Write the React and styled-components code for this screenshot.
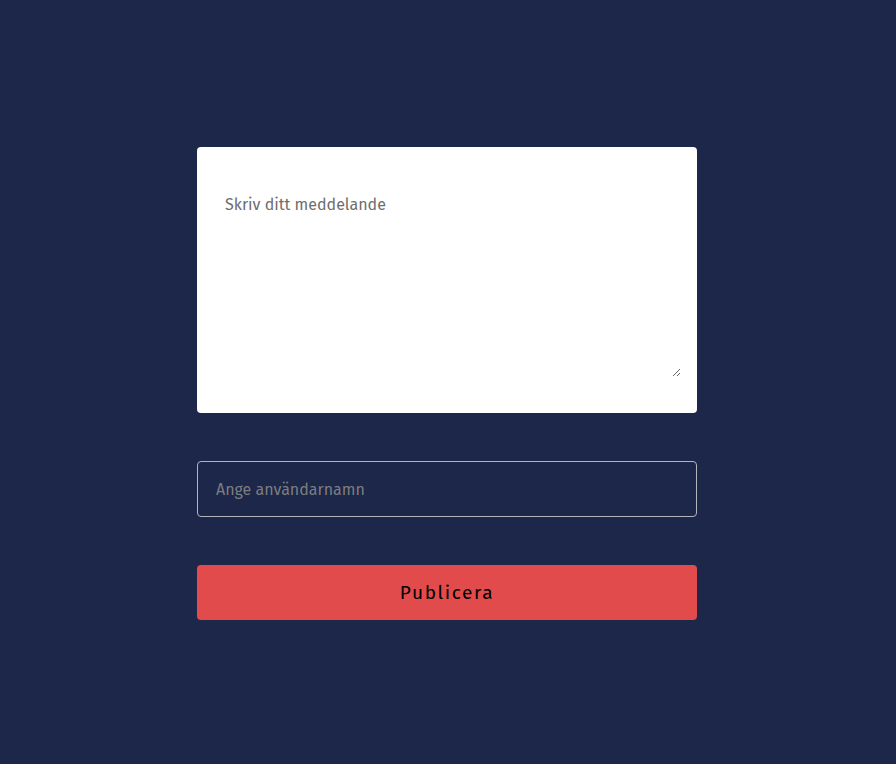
import React from "react";
import styled, { createGlobalStyle } from "styled-components";

const GlobalStyle = createGlobalStyle`
  html, body {
    margin: 0;
    padding: 0;
    background: #1c2749;
  }
  body {
    font-family: "Fira Sans", "Noto Sans", "Open Sans", sans-serif;
  }
`;

const App = () => {
  return (
    <Page>
      <GlobalStyle />
      <Form onSubmit={(e) => e.preventDefault()}>
        <MessageCard>
          <MessageField placeholder="Skriv ditt meddelande" />
        </MessageCard>
        <NameField type="text" placeholder="Ange användarnamn" />
        <PublishButton type="submit">Publicera</PublishButton>
      </Form>
    </Page>
  );
};
export default App;

const Page = styled.div`
  min-height: 764px;
  display: flex;
  justify-content: center;
  padding-top: 147px;
  padding-right: 2px;
  box-sizing: border-box;
`;

const Form = styled.form`
  width: 500px;
  display: flex;
  flex-direction: column;
  gap: 48px;
`;

const MessageCard = styled.div`
  background: #ffffff;
  border-radius: 4px;
  padding: 16px 16px 36px 16px;
  height: 266px;
  box-sizing: border-box;
  display: flex;
`;

const MessageField = styled.textarea`
  flex: 1;
  border: none;
  outline: none;
  padding: 32px 12px 12px 12px;
  font-family: inherit;
  font-size: 16px;
  color: #333;
  background: transparent;
  &::placeholder {
    color: #6e6e6e;
  }
`;

const NameField = styled.input`
  height: 56px;
  box-sizing: border-box;
  border: 1px solid #b4b4bc;
  border-radius: 4px;
  background: transparent;
  padding: 0 18px;
  font-family: inherit;
  font-size: 16px;
  color: #ddd;
  outline: none;
  &::placeholder {
    color: #7d7d80;
  }
`;

const PublishButton = styled.button`
  height: 55px;
  border: none;
  border-radius: 4px;
  background: #e24b4b;
  color: #000;
  font-family: inherit;
  font-size: 19px;
  letter-spacing: 1.6px;
  cursor: pointer;
`;
